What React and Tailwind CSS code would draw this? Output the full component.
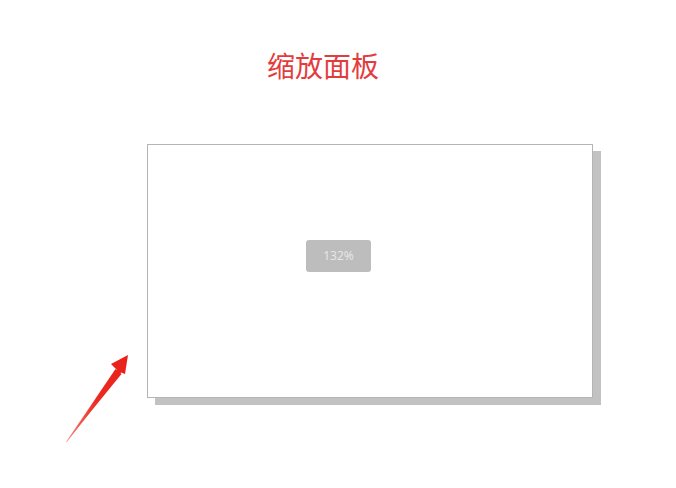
import React from "react";

export default function App() {
  return (
    <div className="relative w-[676px] h-[488px] bg-white overflow-hidden" style={{ fontFamily: '"Noto Sans", "Noto Sans CJK SC", sans-serif' }}>
      <div className="pt-[45px] pl-[267px]">
        <div className="text-[28px] leading-[40px] text-[#e23d3d]" style={{ fontFamily: '"Noto Sans CJK SC", sans-serif' }}>
          缩放面板
        </div>
      </div>
      <div className="mt-[59px] ml-[147px] w-[446px] h-[254px] border border-[#b4b4b4] bg-white shadow-[8px_7px_0_0_#c2c2c2] flex items-start pt-[95px] pl-[158px]">
        <div className="w-[65px] h-[32px] rounded-[3px] bg-[#bdbdbd] flex items-center justify-center text-[12px] text-[#e6e6e6]">
          132%
        </div>
      </div>
      <svg className="absolute left-0 top-0" width="676" height="488" viewBox="0 0 676 488">
        <defs>
          <linearGradient id="ag" x1="66" y1="442" x2="127" y2="355" gradientUnits="userSpaceOnUse">
            <stop offset="0" stopColor="#f06a5a" stopOpacity="0.6" />
            <stop offset="0.5" stopColor="#ec2a22" />
            <stop offset="1" stopColor="#e8201a" />
          </linearGradient>
        </defs>
        <polygon points="66,442 117,370 111,364 128,355 125,374 121,372.5 67,442" fill="url(#ag)" />
        <polygon points="66,442 115.5,369 121.5,374" fill="url(#ag)" />
      </svg>
    </div>
  );
}
